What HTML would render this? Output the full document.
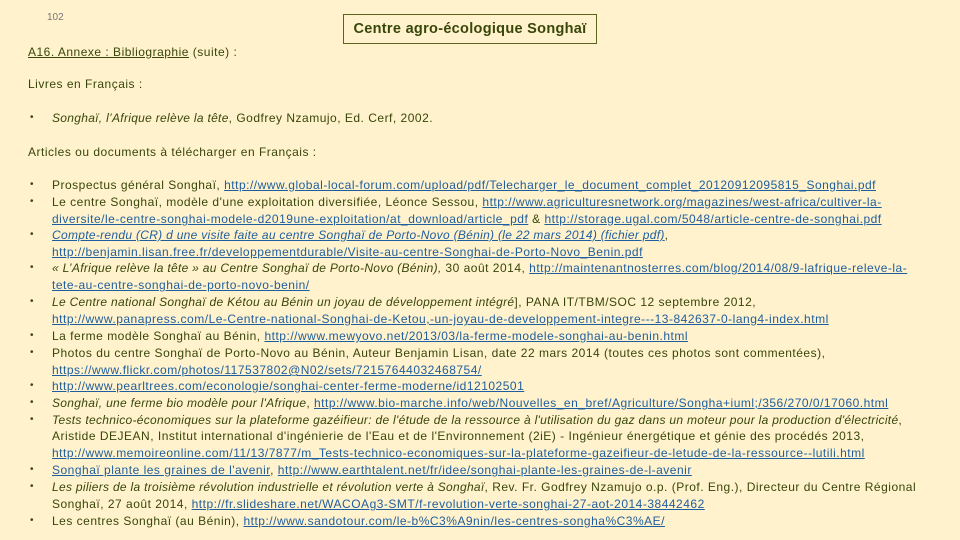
<!DOCTYPE html>
<html><head><meta charset="utf-8"><style>
body{margin:0;width:960px;height:540px;background:#FFF2CC;overflow:hidden;position:relative;font-family:"Liberation Sans",sans-serif;color:#38460A;font-size:12px}
.l{position:absolute;left:52px;white-space:nowrap;line-height:14px;letter-spacing:0.5px}
.b{position:absolute;left:30px;line-height:14px;font-size:10px}
a,.u{color:#1F5E9E;text-decoration:underline}
i{font-style:italic;letter-spacing:0.3px}
.box{position:absolute;left:343px;top:14px;width:254px;height:30px;border:1px solid #5a6420;box-sizing:border-box;font-size:14.5px;text-align:center;line-height:29px;color:#38460A;font-weight:bold;letter-spacing:0.3px}
</style></head><body>
<div style="position:absolute;left:47px;top:12px;font-size:10px;color:#777">102</div>
<div class="box">Centre agro-écologique Songhaï</div>
<div class="l" style="left:28px;top:45px"><span style="text-decoration:underline">A16. Annexe : Bibliographie</span> (suite) :</div>
<div class="l" style="left:28px;top:77px">Livres en Français :</div>
<div class="b" style="top:111px">•</div>
<div class="l" style="top:111px"><i>Songhaï, l’Afrique relève la tête</i>, Godfrey Nzamujo, Ed. Cerf, 2002.</div>
<div class="l" style="left:28px;top:145px">Articles ou documents à télécharger en Français :</div>

<div class="b" style="top:178px">•</div>
<div class="l" style="top:178px">Prospectus général Songhaï, <a>http://www.global-local-forum.com/upload/pdf/Telecharger_le_document_complet_20120912095815_Songhai.pdf</a></div>
<div class="b" style="top:195px">•</div>
<div class="l" style="top:195px">Le centre Songhaï, modèle d'une exploitation diversifiée, Léonce Sessou, <a>http://www.agriculturesnetwork.org/magazines/west-africa/cultiver-la-</a></div>
<div class="l" style="top:212px"><a>diversite/le-centre-songhai-modele-d2019une-exploitation/at_download/article_pdf</a> &amp; <a>http://storage.ugal.com/5048/article-centre-de-songhai.pdf</a></div>
<div class="b" style="top:228px">•</div>
<div class="l" style="top:228px"><i class="u">Compte-rendu (CR) d une visite faite au centre Songhaï de Porto-Novo (Bénin) (le 22 mars 2014) (fichier pdf)</i>,</div>
<div class="l" style="top:245px"><a>http://benjamin.lisan.free.fr/developpementdurable/Visite-au-centre-Songhai-de-Porto-Novo_Benin.pdf</a></div>
<div class="b" style="top:261px">•</div>
<div class="l" style="top:261px"><i>« L’Afrique relève la tête » au Centre Songhaï de Porto-Novo (Bénin),</i> 30 août 2014, <a>http://maintenantnosterres.com/blog/2014/08/9-lafrique-releve-la-</a></div>
<div class="l" style="top:278px"><a>tete-au-centre-songhai-de-porto-novo-benin/</a></div>
<div class="b" style="top:295px">•</div>
<div class="l" style="top:295px"><i>Le Centre national Songhaï de Kétou au Bénin un joyau de développement intégré</i>], PANA IT/TBM/SOC 12 septembre 2012,</div>
<div class="l" style="top:312px"><a>http://www.panapress.com/Le-Centre-national-Songhai-de-Ketou,-un-joyau-de-developpement-integre---13-842637-0-lang4-index.html</a></div>
<div class="b" style="top:329px">•</div>
<div class="l" style="top:329px">La ferme modèle Songhaï au Bénin, <a>http://www.mewyovo.net/2013/03/la-ferme-modele-songhai-au-benin.html</a></div>
<div class="b" style="top:346px">•</div>
<div class="l" style="top:346px">Photos du centre Songhaï de Porto-Novo au Bénin, Auteur Benjamin Lisan, date 22 mars 2014 (toutes ces photos sont commentées),</div>
<div class="l" style="top:363px"><a>https://www.flickr.com/photos/117537802@N02/sets/72157644032468754/</a></div>
<div class="b" style="top:379px">•</div>
<div class="l" style="top:379px"><a>http://www.pearltrees.com/econologie/songhai-center-ferme-moderne/id12102501</a></div>
<div class="b" style="top:396px">•</div>
<div class="l" style="top:396px"><i>Songhaï, une ferme bio modèle pour l'Afrique</i>, <a>http://www.bio-marche.info/web/Nouvelles_en_bref/Agriculture/Songha+iuml;/356/270/0/17060.html</a></div>
<div class="b" style="top:413px">•</div>
<div class="l" style="top:413px"><i>Tests technico-économiques sur la plateforme gazéifieur: de l'étude de la ressource à l'utilisation du gaz dans un moteur pour la production d'électricité</i>,</div>
<div class="l" style="top:429px">Aristide DEJEAN, Institut international d'ingénierie de l'Eau et de l'Environnement (2iE) - Ingénieur énergétique et génie des procédés 2013,</div>
<div class="l" style="top:446px"><a>http://www.memoireonline.com/11/13/7877/m_Tests-technico-economiques-sur-la-plateforme-gazeifieur-de-letude-de-la-ressource--lutili.html</a></div>
<div class="b" style="top:463px">•</div>
<div class="l" style="top:463px"><a>Songhaï plante les graines de l'avenir</a>, <a>http://www.earthtalent.net/fr/idee/songhai-plante-les-graines-de-l-avenir</a></div>
<div class="b" style="top:480px">•</div>
<div class="l" style="top:480px"><i>Les piliers de la troisième révolution industrielle et révolution verte à Songhaï</i>, Rev. Fr. Godfrey Nzamujo o.p. (Prof. Eng.), Directeur du Centre Régional</div>
<div class="l" style="top:497px">Songhaï, 27 août 2014, <a>http://fr.slideshare.net/WACOAg3-SMT/f-revolution-verte-songhai-27-aot-2014-38442462</a></div>
<div class="b" style="top:514px">•</div>
<div class="l" style="top:514px">Les centres Songhaï (au Bénin), <a>http://www.sandotour.com/le-b%C3%A9nin/les-centres-songha%C3%AE/</a></div>
</body></html>
